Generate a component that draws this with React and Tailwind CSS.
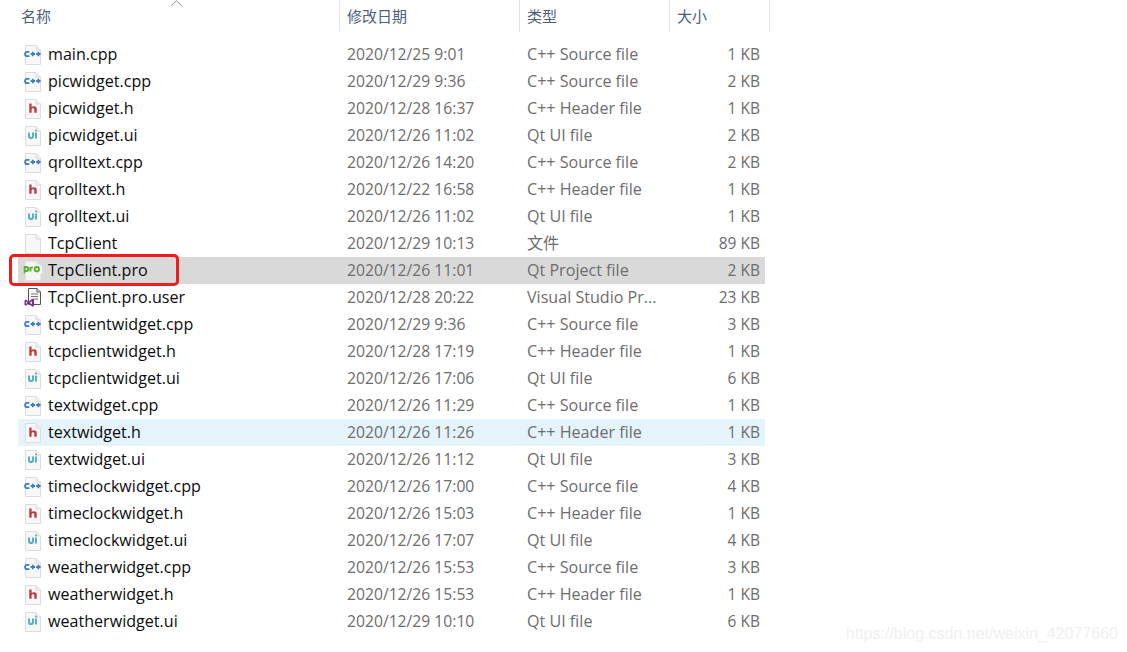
const CPP = "C++ Source file", H = "C++ Header file", UI = "Qt UI file";
const files = [
  ["main.cpp", "2020/12/25 9:01", CPP, "1 KB", "cpp"],
  ["picwidget.cpp", "2020/12/29 9:36", CPP, "2 KB", "cpp"],
  ["picwidget.h", "2020/12/28 16:37", H, "1 KB", "h"],
  ["picwidget.ui", "2020/12/26 11:02", UI, "2 KB", "ui"],
  ["qrolltext.cpp", "2020/12/26 14:20", CPP, "2 KB", "cpp"],
  ["qrolltext.h", "2020/12/22 16:58", H, "1 KB", "h"],
  ["qrolltext.ui", "2020/12/26 11:02", UI, "1 KB", "ui"],
  ["TcpClient", "2020/12/29 10:13", "文件", "89 KB", "file"],
  ["TcpClient.pro", "2020/12/26 11:01", "Qt Project file", "2 KB", "pro"],
  ["TcpClient.pro.user", "2020/12/28 20:22", "Visual Studio Pr...", "23 KB", "user"],
  ["tcpclientwidget.cpp", "2020/12/29 9:36", CPP, "3 KB", "cpp"],
  ["tcpclientwidget.h", "2020/12/28 17:19", H, "1 KB", "h"],
  ["tcpclientwidget.ui", "2020/12/26 17:06", UI, "6 KB", "ui"],
  ["textwidget.cpp", "2020/12/26 11:29", CPP, "1 KB", "cpp"],
  ["textwidget.h", "2020/12/26 11:26", H, "1 KB", "h"],
  ["textwidget.ui", "2020/12/26 11:12", UI, "3 KB", "ui"],
  ["timeclockwidget.cpp", "2020/12/26 17:00", CPP, "4 KB", "cpp"],
  ["timeclockwidget.h", "2020/12/26 15:03", H, "1 KB", "h"],
  ["timeclockwidget.ui", "2020/12/26 17:07", UI, "4 KB", "ui"],
  ["weatherwidget.cpp", "2020/12/26 15:53", CPP, "3 KB", "cpp"],
  ["weatherwidget.h", "2020/12/26 15:53", H, "1 KB", "h"],
  ["weatherwidget.ui", "2020/12/29 10:10", UI, "6 KB", "ui"],
];

function Sheet() {
  return (
    <>
      <path d="M2.5 0.5H13L17.5 5V19.5H2.5Z" fill="#f7f7f7" stroke="#dcdcdc" />
      <path d="M13 0.5V5H17.5" fill="#ececec" stroke="#dcdcdc" />
    </>
  );
}

function FileIcon({ kind }) {
  return (
    <svg width="20" height="20" viewBox="0 0 20 20" className="shrink-0">
      {kind !== "user" && kind !== "pro" && <Sheet />}
      {kind === "cpp" && (
        <g fill="none" stroke="#3b7fbf" strokeWidth="1.8">
          <path d="M6.4 6.8H4C1.4 6.8 1.4 11.2 4 11.2H6.4" />
          <path d="M7.6 9H12M9.8 6.8V11.2" />
          <path d="M13.2 9H17.6M15.4 6.8V11.2" />
        </g>
      )}
      {kind === "h" && (
        <path d="M6.3 4.5H8.6V8C10 7 13.7 6.8 13.7 9.8V13.8H11.3V10.3C11.3 9 8.6 9 8.6 10.5V13.8H6.3Z" fill="#bb3a45" />
      )}
      {kind === "ui" && (
        <g fill="none" stroke="#55b0c8" strokeWidth="2">
          <path d="M6 6.4V10.2C6 12.6 10 12.6 10 10.2V6.4" />
          <path d="M13 6.4V12.6" />
          <path d="M13 3.8V5.3" />
        </g>
      )}
      {kind === "pro" && (
        <>
          <path d="M2.5 0.5H13L17.5 5V19.5H2.5Z" fill="#f5f5f5" stroke="#e2e2e2" />
          <path d="M13 0.5V5H17.5" fill="#ededed" stroke="#e2e2e2" />
          <rect x="0" y="4.5" width="19" height="8.5" rx="1" fill="#f5f5f5" />
          <g fill="none" stroke="#5cae2e" strokeWidth="1.9">
            <path d="M1.5 12.6V6H3.4C5.8 6 5.8 10 3.4 10H1.5" />
            <path d="M7.4 10.4V6M7.4 8C7.7 6.7 8.6 6.2 9.8 6.2" />
            <circle cx="13.8" cy="8.2" r="2.2" />
          </g>
        </>
      )}
      {kind === "user" && (
        <>
          <path d="M5.5 0.5H14L17.5 4V16.5H5.5Z" fill="#f8f8f8" stroke="#555" />
          <path d="M14 0.5V4H17.5" fill="#ddd" stroke="#555" />
          <path d="M8 6H15M8 8.5H15M11 11H15" stroke="#777" strokeWidth="1" />
          <path d="M1.5 12.5L3 11.5L5.5 13.8L9.5 10.5L11 11.3V18L9.5 18.8L5.5 15.6L3 17.8L1.5 17ZM3 13.5V15.9L4.3 14.7ZM9 13.2L6.8 14.7L9 16.2Z" fill="#7a2fa0" />
        </>
      )}
    </svg>
  );
}

const sans = "[font-family:'Open_Sans','Noto_Sans_CJK_SC',sans-serif]";

function HeaderCell({ w, children }) {
  return (
    <div className={`${w} h-[32px] shrink-0 border-r border-[#e5e5e5] pl-[7px] flex items-center text-[15px] text-[#4c607a] [font-family:'Noto_Sans_CJK_SC','Noto_Sans',sans-serif]`}>
      {children}
    </div>
  );
}

export default function App() {
  return (
    <div className={`relative w-[1127px] h-[652px] overflow-hidden bg-white ${sans}`}>
      <div className="flex h-[32px]">
        <HeaderCell w="w-[340px] pl-[21px]">名称</HeaderCell>
        <HeaderCell w="w-[180px]">修改日期</HeaderCell>
        <HeaderCell w="w-[150px]">类型</HeaderCell>
        <HeaderCell w="w-[100px]">大小</HeaderCell>
      </div>
      <svg width="11" height="6" viewBox="0 0 11 6" className="absolute left-[171px] top-0">
        <path d="M0.5 5.5L5.5 0.8L10.5 5.5" fill="none" stroke="#8c8c8c" />
      </svg>
      <div className="mt-[9px] ml-[18px] w-[747px] flex flex-col">
        {files.map(([name, date, type, size, kind]) => (
          <div
            key={name}
            className={`flex items-center h-[27px] leading-[27px] ${
              name === "TcpClient.pro" ? "bg-[#d9d9d9]" : name === "textwidget.h" ? "bg-[#e5f3fb]" : ""
            }`}
          >
            <div className="w-[329px] shrink-0 flex items-center pl-[5px] gap-[5px] text-[16.1px] text-[#0c0c0c]">
              <FileIcon kind={kind} />
              <span className="whitespace-nowrap">{name}</span>
            </div>
            <div className="w-[180px] shrink-0 whitespace-nowrap text-[15.7px] text-[#6d6d6d]">{date}</div>
            <div className="w-[150px] shrink-0 whitespace-nowrap text-[16.1px] text-[#6d6d6d]">{type}</div>
            <div className="w-[83px] shrink-0 whitespace-nowrap text-right text-[15.5px] text-[#6d6d6d]">{size}</div>
          </div>
        ))}
      </div>
      <div className="absolute left-[9px] top-[254px] w-[170px] h-[32px] rounded-[5px] border-[3px] border-[#f01c1c]" />
      <div className="absolute right-[9px] top-[623px] text-[16px] leading-[22px] text-[#f0f0f0] whitespace-nowrap [font-family:'Liberation_Sans',sans-serif]">
        https://blog.csdn.net/weixin_42077660
      </div>
    </div>
  );
}
